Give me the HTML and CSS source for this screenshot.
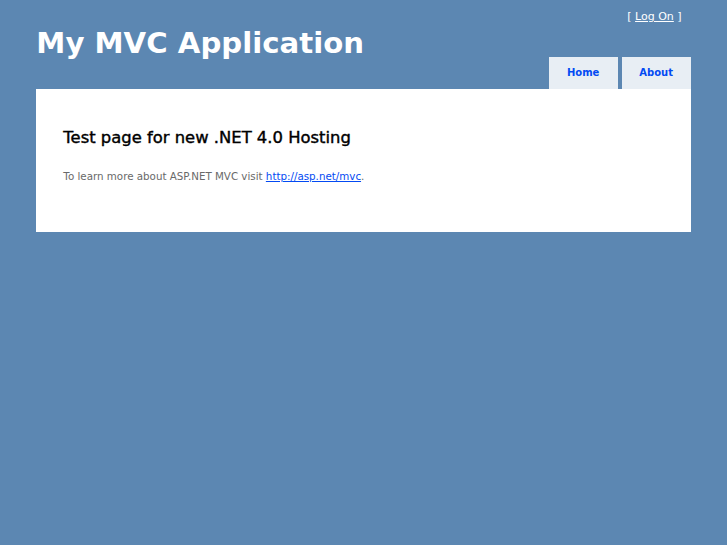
FILE: index.html
```
<!DOCTYPE html>
<html lang="en">

<head>
    <meta charset="UTF-8">
    <title>My MVC Application</title>
    <link rel="stylesheet" href="styles.css">
</head>

<body>

    <div class="page">
        <div class="header">
            <div class="title">
                <h1>My MVC Application</h1>
            </div>
            <div class="header-right">
                <div class="logindisplay">
                    [ <a href="#">Log On</a> ]
                </div>
                <ul class="menu">
                    <li><a href="#">Home</a></li>
                    <li><a href="#">About</a></li>
                </ul>
            </div>
        </div>

        <div class="main">
            <h2>Test page for new .NET 4.0 Hosting</h2>
            <p>To learn more about ASP.NET MVC visit <a href="#">http://asp.net/mvc</a>.</p>
        </div>
    </div>

</body>

</html>
```

FILE: styles.css
```
body {
    background-color: #5c87b2;
    font-family: "DejaVu Sans", Verdana, sans-serif;
    font-size: 10px;
    color: #696969;
    margin: 0;
    padding: 0;
}

a {
    color: #034af3;
    text-decoration: underline;
}

.page {
    width: 90%;
    margin: 0 auto;
}

.header {
    display: flex;
    justify-content: space-between;
    align-items: stretch;
}

.title h1 {
    margin: 0;
    padding-top: 25px;
    font-size: 29.2px;
    line-height: 36px;
    font-weight: bold;
    color: #fff;
}

.header-right {
    display: flex;
    flex-direction: column;
    align-items: flex-end;
}

.logindisplay {
    margin: 9px 9px 0 0;
    font-size: 11px;
    line-height: 15px;
    color: #fff;
}

.logindisplay a {
    color: #fff;
}

.menu {
    display: flex;
    gap: 4px;
    list-style: none;
    margin: 33px 0 0 0;
    padding: 0;
}

.menu a {
    display: block;
    width: 69px;
    height: 32px;
    line-height: 32px;
    text-align: center;
    font-size: 10px;
    font-weight: bold;
    text-decoration: none;
    background-color: #e8eef4;
    color: #034af3;
}

.main {
    background-color: #fff;
    padding: 39px 27px 50px 27px;
}

.main h2 {
    margin: 0 0 23px 0;
    font-size: 16.4px;
    font-weight: normal;
    -webkit-text-stroke: 0.4px #000;
    color: #000;
}

.main p {
    margin: 0;
    font-size: 10.3px;
}
```
